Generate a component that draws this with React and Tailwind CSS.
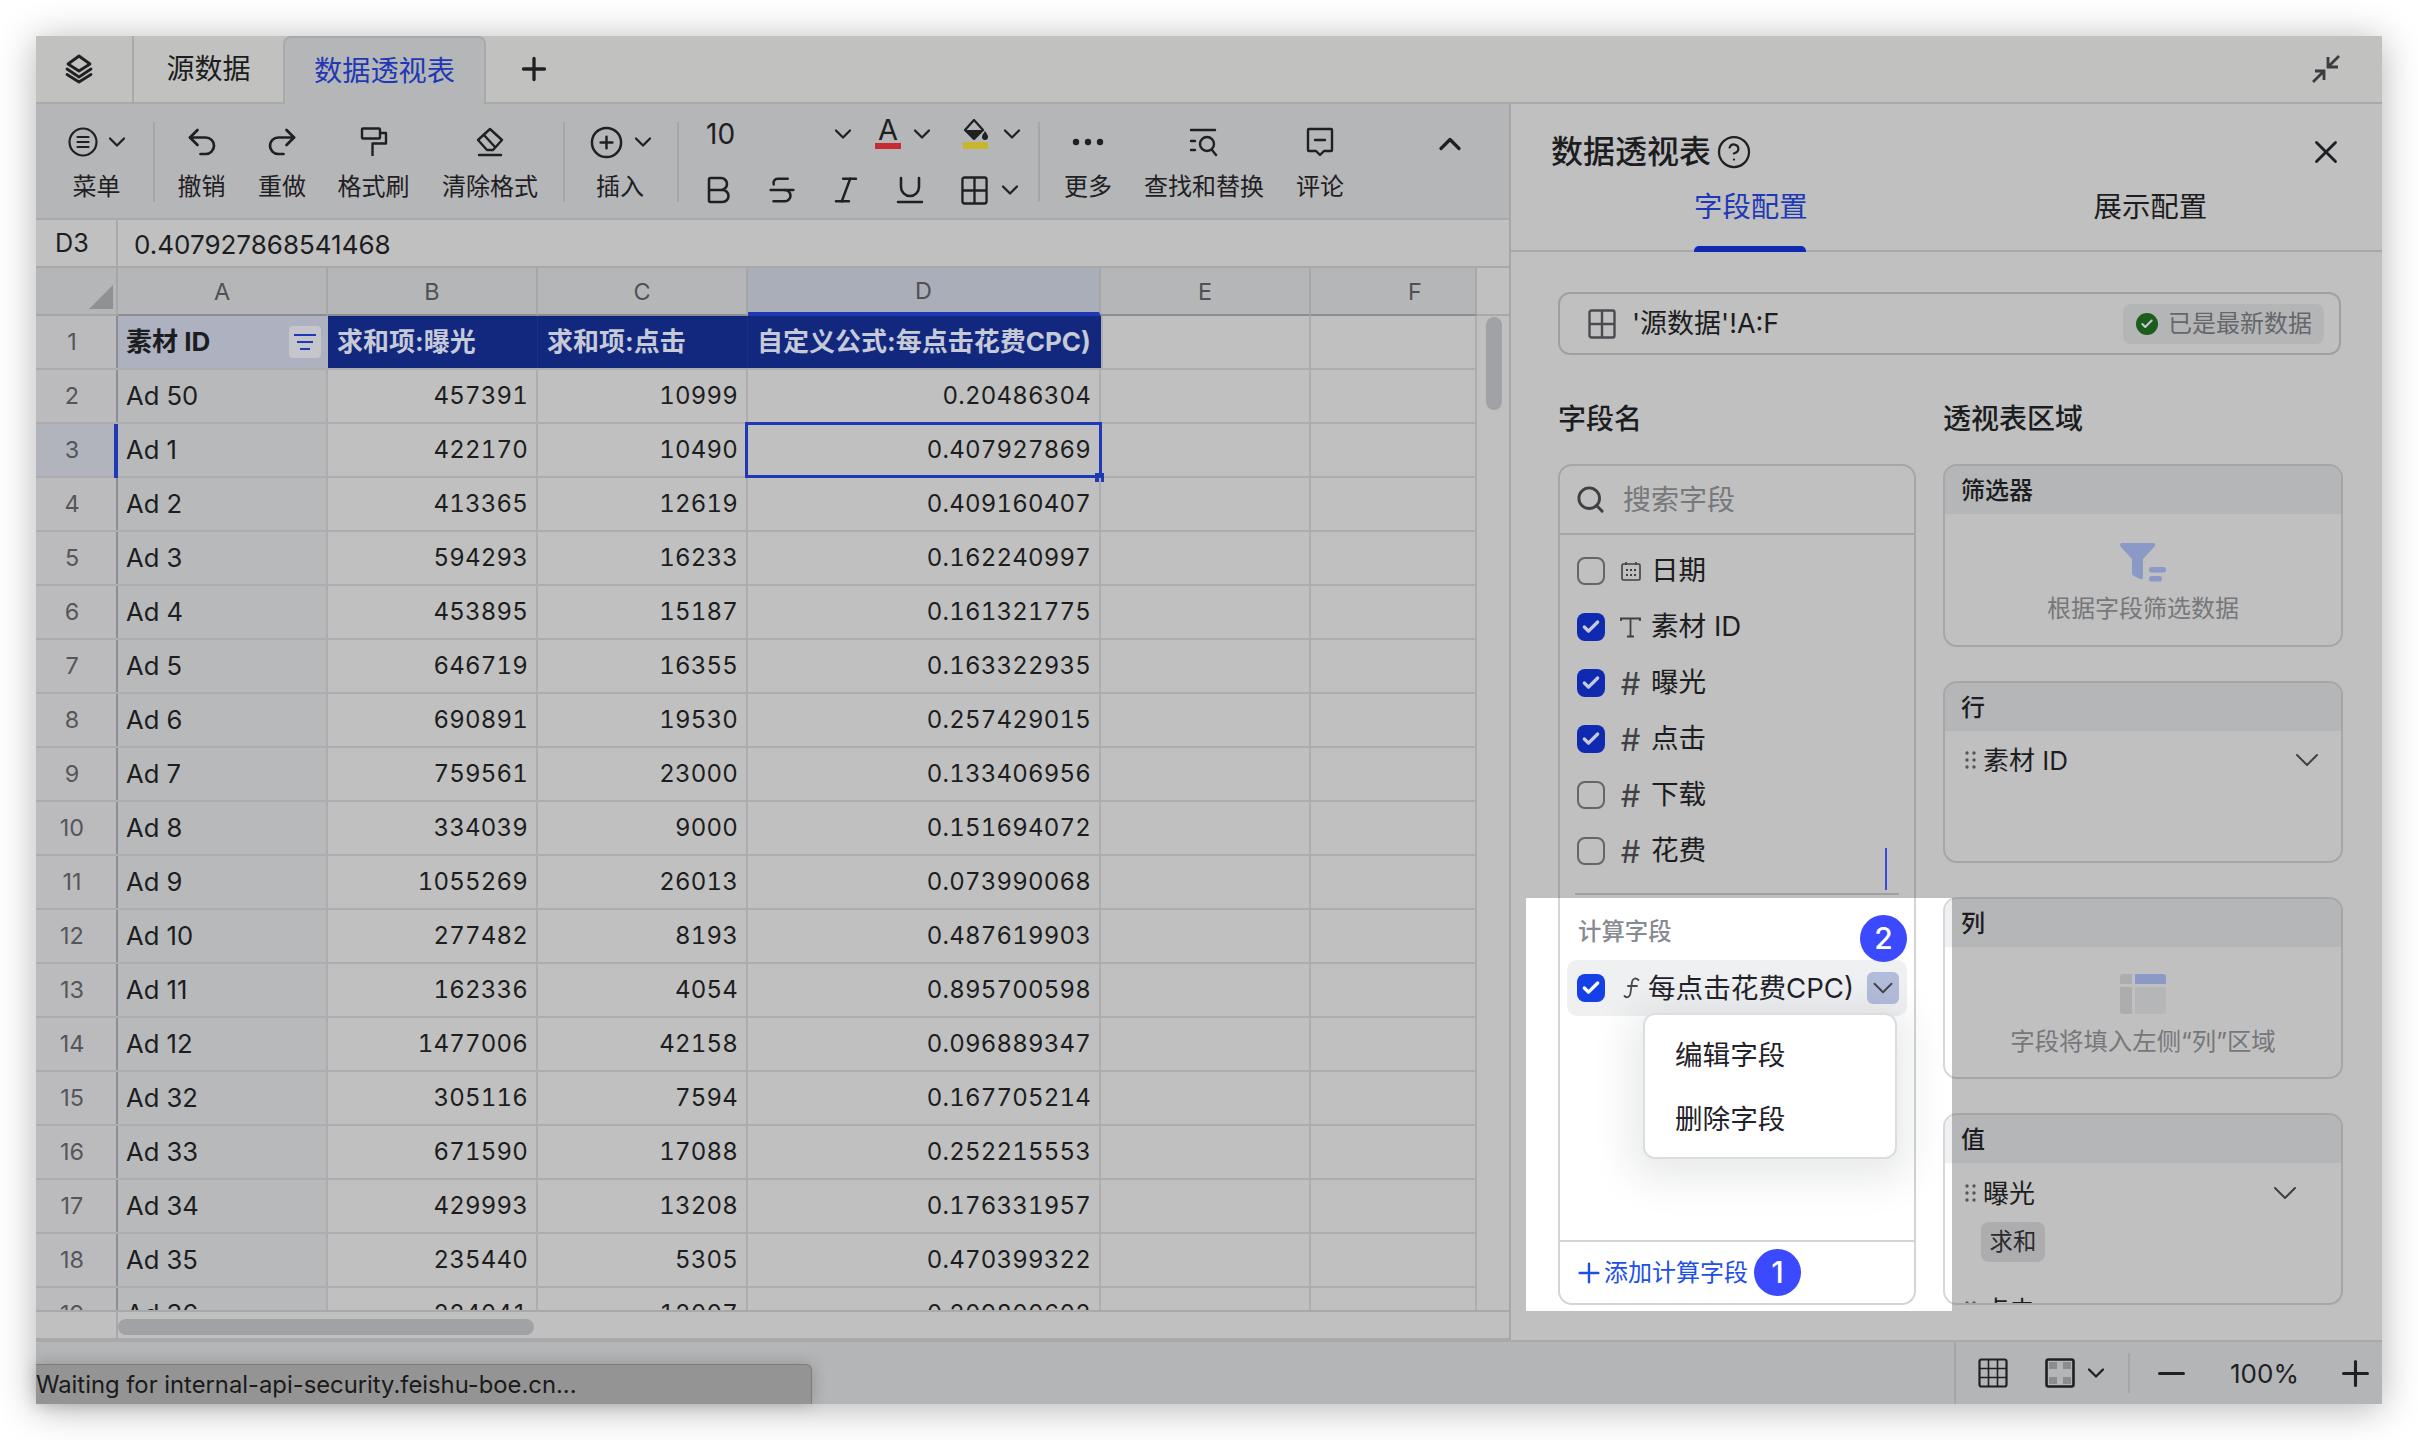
import React from "react";
import { Undo2, Redo2, CirclePlus, ChevronDown, ChevronUp, Bold, Italic, Underline, Strikethrough, X, CircleHelp, Search, Plus, Minus, Check } from "lucide-react";

const rows = [
  ["Ad 50", "457391", "10999", "0.20486304"],
  ["Ad 1", "422170", "10490", "0.407927869"],
  ["Ad 2", "413365", "12619", "0.409160407"],
  ["Ad 3", "594293", "16233", "0.162240997"],
  ["Ad 4", "453895", "15187", "0.161321775"],
  ["Ad 5", "646719", "16355", "0.163322935"],
  ["Ad 6", "690891", "19530", "0.257429015"],
  ["Ad 7", "759561", "23000", "0.133406956"],
  ["Ad 8", "334039", "9000", "0.151694072"],
  ["Ad 9", "1055269", "26013", "0.073990068"],
  ["Ad 10", "277482", "8193", "0.487619903"],
  ["Ad 11", "162336", "4054", "0.895700598"],
  ["Ad 12", "1477006", "42158", "0.096889347"],
  ["Ad 32", "305116", "7594", "0.167705214"],
  ["Ad 33", "671590", "17088", "0.252215553"],
  ["Ad 34", "429993", "13208", "0.176331957"],
  ["Ad 35", "235440", "5305", "0.470399322"],
  ["Ad 36", "224041", "12007", "0.209800602"],
];

const Chev = ({ className = "" }) => <ChevronDown size={28} strokeWidth={1.9} className={"shrink-0 -mx-[5px] text-[#1f2023] " + className} />;

const IconLayers = () => (
  <svg width="30" height="30" viewBox="0 0 30 30" fill="none" stroke="#1f2023" strokeWidth="2.8" strokeLinejoin="round" strokeLinecap="round">
    <path d="M15 2 L26 10 L15 17 L4 10Z" />
    <path d="M3 15 L15 23 L27 15" />
    <path d="M3 20.5 L15 28 L27 20.5" />
  </svg>
);
const IconMenu = () => (
  <svg width="30" height="30" viewBox="0 0 30 30" fill="none" stroke="#1f2023" strokeWidth="2.2" strokeLinecap="round">
    <circle cx="15" cy="15" r="13.5" />
    <path d="M9.5 10h11M9.5 15h11M9.5 20h11" />
  </svg>
);
const IconPainter = () => (
  <svg width="30" height="30" viewBox="0 0 30 30" fill="none" stroke="#1f2023" strokeWidth="2.4" strokeLinejoin="round">
    <rect x="3" y="1.5" width="18" height="10" rx="1" />
    <path d="M21 6h6v10.5H13.5V29" />
  </svg>
);
const IconEraser = () => (
  <svg width="30" height="30" viewBox="0 0 30 30" fill="none" stroke="#1f2023" strokeWidth="2.4" strokeLinejoin="round" strokeLinecap="round">
    <path d="M15 2 L27 13 L18 23 H12 L3 13 Z" />
    <path d="M9 8 L20 20" />
    <path d="M4 28h22" />
  </svg>
);
const IconFill = () => (
  <svg width="26" height="30" viewBox="0 0 26 30">
    <path d="M11 1 L20 11 L11 20 L2 11Z" fill="none" stroke="#1f2023" strokeWidth="2.2" strokeLinejoin="round" />
    <path d="M2.5 11 H19.5 L11 20Z" fill="#1f2023" />
    <path d="M22 12 C24 15 25 16 25 18 A3 3 0 0 1 19 18 C19 16 20 15 22 12Z" fill="#1f2023" />
    <rect x="0" y="23" width="25" height="7" rx="1" fill="#c9b62f" />
  </svg>
);
const IconDots3 = () => (
  <svg width="32" height="8" viewBox="0 0 32 8" fill="#1f2023">
    <circle cx="4" cy="4" r="3.2" /><circle cx="16" cy="4" r="3.2" /><circle cx="28" cy="4" r="3.2" />
  </svg>
);
const IconFind = () => (
  <svg width="30" height="30" viewBox="0 0 30 30" fill="none" stroke="#1f2023" strokeWidth="2.4" strokeLinecap="round">
    <path d="M2 3h24M2 14h4M2 23h4" />
    <circle cx="18" cy="17" r="7" />
    <path d="M23 23l4 5" />
  </svg>
);
const IconComment = () => (
  <svg width="28" height="30" viewBox="0 0 28 30" fill="none" stroke="#1f2023" strokeWidth="2.4" strokeLinejoin="round" strokeLinecap="round">
    <path d="M3 2h22a1 1 0 0 1 1 1v20a1 1 0 0 1-1 1h-7l-4 4-4-4H3a1 1 0 0 1-1-1V3a1 1 0 0 1 1-1z" />
    <path d="M9 13h10" />
  </svg>
);
const IconShrink = () => (
  <svg width="30" height="30" viewBox="0 0 30 30" fill="none" stroke="#3b3c40" strokeWidth="2.8">
    <path d="M28 2 L17 13 M17 3 V13 H27" />
    <path d="M2 28 L12 18 M4 17 H13 V26" />
  </svg>
);
const IconSheet = ({ c = "#4a4b50", w = 28, h = 30 }) => (
  <svg width={w} height={h} viewBox="0 0 28 30" fill="none" stroke={c} strokeWidth="2.4">
    <rect x="1.5" y="1.5" width="25" height="27" rx="2" />
    <path d="M14 1.5v27M1.5 15h25" />
  </svg>
);
const IconCal = () => (
  <svg width="20" height="20" viewBox="0 0 20 20" fill="none" stroke="#3f4044" strokeWidth="1.6">
    <rect x="1" y="3" width="18" height="16" rx="1.5" />
    <path d="M5 1v3M15 1v3" />
    <path d="M5 9h2M9 9h2M13 9h2M5 14h2M9 14h2M13 14h2" strokeWidth="2" />
  </svg>
);
const IconT = () => (
  <svg width="21" height="21" viewBox="0 0 21 21" fill="none" stroke="#3f4044" strokeWidth="1.8">
    <path d="M1 4V1.5h19V4M10.5 1.5V19.5M7 19.5h7" />
  </svg>
);
const IconFx = () => (
  <svg width="17" height="22" viewBox="0 0 17 22" fill="none" stroke="#4a4b50" strokeWidth="1.8" strokeLinecap="round">
    <path d="M15.5 3 C12 0 9.5 2 9 5 L7.5 16 C7 20 4 21.5 1.5 19" />
    <path d="M5 9h9" />
  </svg>
);
const IconFunnel = () => (
  <svg width="46" height="39" viewBox="0 0 46 39" fill="#8a99c6">
    <path d="M1 0 H34 Q36 1 35 3 L23 16 V34 Q23 37 20 36 L14 33 Q12 32 12 30 V16 L0 3 Q0 1 1 0Z" />
    <rect x="29" y="24" width="17" height="5.5" rx="2.5" />
    <rect x="29" y="33" width="13" height="5.5" rx="2.5" />
  </svg>
);
const IconColumn = () => (
  <svg width="46" height="40" viewBox="0 0 46 40">
    <path d="M3 0 H12 V10 H0 V3 A3 3 0 0 1 3 0Z" fill="#adadaf" />
    <path d="M0 13 H12 V40 H3 A3 3 0 0 1 0 37Z" fill="#adadaf" />
    <path d="M15 0 H43 A3 3 0 0 1 46 3 V10 H15Z" fill="#8a99c6" />
    <path d="M15 13 H46 V37 A3 3 0 0 1 43 40 H15Z" fill="#b5b6b8" />
  </svg>
);
const Dots = () => (
  <svg width="11" height="18" viewBox="0 0 11 18" fill="#55565a">
    <circle cx="2" cy="2" r="1.7" /><circle cx="9" cy="2" r="1.7" />
    <circle cx="2" cy="9" r="1.7" /><circle cx="9" cy="9" r="1.7" />
    <circle cx="2" cy="16" r="1.7" /><circle cx="9" cy="16" r="1.7" />
  </svg>
);
const IconGridSmall = () => (
  <svg width="30" height="30" viewBox="0 0 30 30" fill="none" stroke="#1f2023" strokeWidth="2.2">
    <rect x="1.5" y="1.5" width="27" height="27" rx="2" />
    <path d="M1.5 10.5h27M1.5 19.5h27M10.5 1.5v27M19.5 1.5v27" strokeWidth="1.6" />
  </svg>
);
const IconFreeze = () => (
  <svg width="30" height="30" viewBox="0 0 30 30">
    <rect x="4" y="4" width="8" height="7" fill="#8b8c8e" />
    <rect x="18" y="4" width="8" height="7" fill="#8b8c8e" />
    <rect x="4" y="19" width="8" height="7" fill="#8b8c8e" />
    <rect x="18" y="19" width="8" height="7" fill="#8b8c8e" />
    <rect x="1.5" y="1.5" width="27" height="27" rx="2" fill="none" stroke="#1f2023" strokeWidth="2.6" />
  </svg>
);

function ToolBtn({ icon, label, className = "", chev }) {
  return (
    <div className={"flex flex-col items-center shrink-0 pt-[23px] " + className}>
      <div className="h-[30px] flex items-center gap-[10px] text-[#1f2023]">
        {icon}
        {chev && <Chev />}
      </div>
      <div className="mt-[14px] h-[32px] leading-[32px] text-[24px] text-[#1f2023] whitespace-nowrap">{label}</div>
    </div>
  );
}
const VDiv = () => <div className="w-[2px] h-[80px] mt-[18px] bg-[#a5a6a8] shrink-0" />;
const Slot = ({ children, className = "" }) => <div className={"w-[60px] shrink-0 flex justify-center " + className}>{children}</div>;

function Toolbar() {
  return (
    <div className="h-[116px] shrink-0 flex bg-[#b5b6b8] border-b-2 border-[#a9a9ab]">
      <ToolBtn className="w-[117px] pl-[4px]" icon={<IconMenu />} chev label="菜单" />
      <VDiv />
      <ToolBtn className="w-[93px]" icon={<Undo2 size={36} strokeWidth={1.8} />} label="撤销" />
      <ToolBtn className="w-[68px]" icon={<Redo2 size={36} strokeWidth={1.8} />} label="重做" />
      <ToolBtn className="w-[115px]" icon={<IconPainter />} label="格式刷" />
      <ToolBtn className="w-[118px]" icon={<IconEraser />} label="清除格式" />
      <div className="w-[14px] shrink-0" />
      <VDiv />
      <ToolBtn className="w-[112px] pr-[2px]" icon={<CirclePlus size={35} strokeWidth={1.7} />} chev label="插入" />
      <VDiv />
      <div className="w-[359px] shrink-0 pt-[12px] text-[#1f2023]">
        <div className="h-[36px] flex items-center">
          <span className="ml-[27px] w-[128px] text-[28px]">10</span>
          <Chev />
          <div className="ml-[23px] w-[26px] flex flex-col items-center">
            <span className="text-[29px] leading-[22px] h-[22px]">A</span>
            <div className="mt-[2px] w-[26px] h-[6px] bg-[#c52b30]" />
          </div>
          <Chev className="ml-[7px]" />
          <div className="ml-[32px]"><IconFill /></div>
          <Chev className="ml-[9px]" />
        </div>
        <div className="mt-[20px] h-[36px] flex items-center">
          <Slot className="ml-[9px]"><Bold size={36} strokeWidth={1.7} /></Slot>
          <Slot className="ml-[4px]"><Strikethrough size={34} strokeWidth={1.8} /></Slot>
          <Slot className="ml-[4px]"><Italic size={34} strokeWidth={1.8} /></Slot>
          <Slot className="ml-[3.5px]"><Underline size={36} strokeWidth={1.7} /></Slot>
          <Slot className="ml-[4.5px]"><IconSheet c="#1f2023" w={27} h={29} /></Slot>
          <Chev className="-ml-[8px]" />
        </div>
      </div>
      <VDiv />
      <ToolBtn className="w-[96px]" icon={<IconDots3 />} label="更多" />
      <ToolBtn className="w-[136px]" icon={<IconFind />} label="查找和替换" />
      <ToolBtn className="w-[96px]" icon={<IconComment />} label="评论" />
      <div className="ml-auto mr-[41px] pt-[22px]"><ChevronUp size={36} strokeWidth={2.2} className="text-[#1f2023]" /></div>
    </div>
  );
}

const colH = "h-full flex items-center justify-center pt-[2px] border-r-2 border-[#a6a7a9] text-[23.4px] text-[#505156]";

function Sheet() {
  return (
    <div className="flex-1 flex flex-col min-h-0">
      <div className="h-[48px] shrink-0 flex bg-[#b5b6b8]">
        <div className="w-[82px] shrink-0 h-full relative border-r-2 border-b-2 border-[#a6a7a9]">
          <svg className="absolute right-[3px] bottom-[5px]" width="24" height="24" viewBox="0 0 24 24"><path d="M24 0V24H0Z" fill="#8f9194" /></svg>
        </div>
        {["A", "B", "C"].map((l) => (
          <div key={l} className={"w-[210px] shrink-0 border-b-2 !border-b-[#8d8e91] " + colH}>{l}</div>
        ))}
        <div className={"w-[353px] shrink-0 bg-[#aaaeb8] border-b-4 !border-b-[#1f39b4] " + colH}>D</div>
        <div className={"w-[210px] shrink-0 border-b-2 !border-b-[#8d8e91] " + colH}>E</div>
        <div className={"w-[166px] shrink-0 border-b-2 !border-b-[#8d8e91] pl-[44px] " + colH}>F</div>
        <div className="flex-1 bg-[#c0c0c0] border-b-2 border-[#a9a9ab]" />
      </div>
      <div className="flex-1 flex min-h-0">
        <div className="w-[1441px] shrink-0 overflow-hidden">
          <div className="h-[54px] flex border-b-2 border-[#adadaf]">
            <div className="w-[82px] shrink-0 bg-[#bbbbbd] border-r-2 border-[#8d8e91] flex items-center justify-center pr-[8px] text-[23.4px] text-[#55565a]">1</div>
            <div className="w-[210px] shrink-0 bg-[#adb1c0] flex items-center justify-between pl-[8px] pr-[7px] text-[26px] font-bold text-[#1c1d20]">
              <span className="pb-[2px]">素材 ID</span>
              <div className="w-[32px] h-[32px] rounded-[4px] bg-[#c5c6cb] flex flex-col items-center justify-center gap-[5px]">
                <div className="w-[22px] h-[2px] bg-[#1f39b4]" />
                <div className="w-[16px] h-[2px] bg-[#1f39b4]" />
                <div className="w-[10px] h-[2px] bg-[#1f39b4]" />
              </div>
            </div>
            {["求和项:曝光", "求和项:点击"].map((t) => (
              <div key={t} className="w-[210px] shrink-0 bg-[#12287f] flex items-center pl-[9px] pb-[2px] text-[26px] font-bold text-[#c6c9d6] border-r border-[#1b2f85]">{t}</div>
            ))}
            <div className="w-[353px] shrink-0 bg-[#12287f] flex items-center pl-[9px] pb-[2px] text-[26px] font-bold text-[#c6c9d6] whitespace-nowrap">自定义公式:每点击花费CPC)</div>
            <div className="w-[210px] shrink-0 border-l-2 border-r-2 border-[#adadaf]" />
            <div className="w-[166px] shrink-0 border-r-2 border-[#adadaf]" />
          </div>
          {rows.map((r, i) => {
            const sel = i === 1;
            const num = "w-[210px] shrink-0 flex items-center justify-end pr-[8px] border-r-2 border-[#adadaf] text-[24px] tabular-nums tracking-[0.2px]";
            return (
              <div key={i} className="h-[54px] flex border-b-2 border-[#adadaf] text-[25.6px] text-[#1c1d20]">
                <div className={"w-[82px] shrink-0 flex items-center justify-center pr-[8px] text-[23.4px] text-[#55565a] border-r-2 border-[#8d8e91] relative " + (sel ? "bg-[#b1b4bd]" : "bg-[#bbbbbd]")}>
                  {i + 2}
                  {sel && <div className="absolute right-[-2px] top-0 bottom-[-2px] w-[4px] bg-[#1f39b4]" />}
                </div>
                <div className="w-[210px] shrink-0 bg-[#b8b9bb] flex items-center pl-[8px] border-r-2 border-[#adadaf]">{r[0]}</div>
                <div className={num}>{r[1]}</div>
                <div className={num}>{r[2]}</div>
                <div className={"!w-[353px] relative " + num}>
                  {r[3]}
                  {sel && (
                    <div className="absolute left-[-3px] right-[-3px] top-[-2px] bottom-[-2px] border-[3px] border-[#1f39b4]">
                      <div className="absolute right-[-5px] bottom-[-7px] w-[9px] h-[9px] bg-[#1f39b4]" />
                    </div>
                  )}
                </div>
                <div className="w-[210px] shrink-0 border-r-2 border-[#adadaf]" />
                <div className="w-[166px] shrink-0 border-r-2 border-[#adadaf]" />
              </div>
            );
          })}
        </div>
        <div className="flex-1 pl-[9px] pt-[1px]">
          <div className="w-[16px] h-[93px] rounded-full bg-[#a1a2a5]" />
        </div>
      </div>
      <div className="h-[30px] shrink-0 flex border-y-2 border-[#a9a9ab]">
        <div className="w-[82px] shrink-0 border-r-2 border-[#a9a9ab]" />
        <div className="mt-[7px] w-[416px] h-[16px] rounded-full bg-[#a1a2a5]" />
      </div>
    </div>
  );
}

function FieldRow({ icon, label, checked, hash }) {
  return (
    <div className="h-[56px] flex items-center pl-[17px]">
      <div className={"w-[28px] h-[28px] rounded-[8px] flex items-center justify-center " + (checked ? "bg-[#0f2ab0]" : "border-2 border-[#65666a]")}>
        {checked && <Check size={20} strokeWidth={4} className="text-[#c6c9d6]" />}
      </div>
      <div className="ml-[14px] w-[23px] flex items-center justify-center text-[#3f4044] text-[31px] leading-none">{hash ? "#" : icon}</div>
      <span className="ml-[9px] text-[27.6px] text-[#1c1d20]">{label}</span>
    </div>
  );
}

function Area({ title, className = "", children }) {
  return (
    <div className={"w-[400px] shrink-0 rounded-[14px] overflow-hidden border-2 border-[#a6a6a8] " + className}>
      <div className="h-[48px] bg-[#b5b6b8] flex items-center pl-[16px] pt-[2px] text-[24px] font-medium text-[#1c1d20]">{title}</div>
      {children}
    </div>
  );
}

function Panel() {
  return (
    <div className="flex-1 border-l-2 border-[#a6a7a9] flex flex-col min-w-0 overflow-hidden">
      <div className="h-[148px] shrink-0 border-b-2 border-[#a9a9ab] relative">
        <div className="pt-[30px] h-[66px] flex items-center pl-[40px] pr-[37px]">
          <span className="text-[32px] font-medium text-[#1c1d20]">数据透视表</span>
          <CircleHelp size={36} strokeWidth={1.5} className="ml-[5px] text-[#1f2023]" />
          <X size={38} strokeWidth={1.8} className="ml-auto text-[#1f2023]" />
        </div>
        <div className="flex h-[76px] pb-[2px] items-center">
          <span className="ml-[183px] text-[28.4px] text-[#1f39b4]">字段配置</span>
          <span className="ml-[286px] text-[28.4px] text-[#1c1d20]">展示配置</span>
        </div>
        <div className="absolute left-[183px] bottom-[-2px] w-[112px] h-[6px] rounded-t-[5px] bg-[#0f2ab0]" />
      </div>
      <div className="pl-[47px] pt-[40px] flex-1 min-h-0 overflow-hidden">
        <div className="w-[783px] h-[63px] rounded-[12px] border-2 border-[#a0a0a3] flex items-center pl-[28px] pr-[15px]">
          <IconSheet />
          <span className="ml-[16px] pt-[2px] text-[27px] text-[#1c1d20]">'源数据'!A:F</span>
          <div className="ml-auto h-[40px] w-[201px] rounded-[8px] bg-[#b4b5b7] flex items-center pl-[13px]">
            <div className="w-[22px] h-[22px] rounded-full bg-[#1c5d1e] flex items-center justify-center"><Check size={14} strokeWidth={3.5} className="text-[#c6c9d6]" /></div>
            <span className="ml-[10px] text-[24px] text-[#66676b] whitespace-nowrap">已是最新数据</span>
          </div>
        </div>
        <div className="mt-[44px] h-[40px] flex items-center text-[28px] font-medium text-[#1c1d20]">
          <span className="w-[385px]">字段名</span>
          <span>透视表区域</span>
        </div>
        <div className="mt-[25px] flex gap-[27px] items-start">
          <div className="w-[358px] h-[841px] shrink-0 rounded-[14px] border-2 border-[#a6a6a8] relative">
            <div className="h-[69px] border-b-2 border-[#a6a6a8] flex items-center pl-[15px]">
              <Search size={31} strokeWidth={2.2} className="text-[#3f4044]" />
              <span className="ml-[17px] text-[28px] text-[#77787b]">搜索字段</span>
            </div>
            <div className="pt-[8px]">
              <FieldRow icon={<IconCal />} label="日期" />
              <FieldRow checked icon={<IconT />} label="素材 ID" />
              <FieldRow checked hash label="曝光" />
              <FieldRow checked hash label="点击" />
              <FieldRow hash label="下载" />
              <FieldRow hash label="花费" />
            </div>
            <div className="absolute left-[325px] top-[382px] w-[2px] h-[42px] bg-[#3a4bdb]" />
            <div className="mt-[14px] mx-[15px] h-[2px] bg-[#a0a0a3]" />
          </div>
          <div className="flex flex-col gap-[34px] h-[841px] overflow-hidden">
            <Area title="筛选器" className="h-[183px]">
              <div className="flex flex-col items-center pt-[29px]">
                <IconFunnel />
                <span className="mt-[9px] text-[24px] text-[#76777a]">根据字段筛选数据</span>
              </div>
            </Area>
            <Area title="行" className="h-[182px]">
              <div className="flex items-center h-[60px] pl-[20px] pr-[14px] -mt-[1px]">
                <Dots />
                <span className="ml-[7px] text-[26px] text-[#1c1d20]">素材 ID</span>
                <ChevronDown size={40} strokeWidth={1.2} className="ml-auto text-[#3f4044]" />
              </div>
            </Area>
            <Area title="列" className="h-[182px]">
              <div className="flex flex-col items-center pt-[27px]">
                <IconColumn />
                <span className="mt-[9px] text-[24.4px] text-[#76777a]">字段将填入左侧“列”区域</span>
              </div>
            </Area>
            <Area title="值" className="h-[192px]">
              <div className="flex items-center h-[50px] pl-[20px] pr-[36px] mt-[5px]">
                <Dots />
                <span className="ml-[7px] text-[26px] text-[#1c1d20]">曝光</span>
                <ChevronDown size={40} strokeWidth={1.2} className="ml-auto text-[#3f4044]" />
              </div>
              <div className="ml-[36px] mt-[4px] w-[64px] h-[40px] rounded-[8px] bg-[#adadaf] flex items-center justify-center text-[23.4px] text-[#2a2b2e]">求和</div>
              <div className="flex items-center h-[50px] pl-[20px] pr-[36px] mt-[23px]">
                <Dots />
                <span className="ml-[7px] text-[26px] text-[#1c1d20]">点击</span>
                <ChevronDown size={40} strokeWidth={1.2} className="ml-auto text-[#3f4044]" />
              </div>
            </Area>
          </div>
        </div>
      </div>
    </div>
  );
}

function Footer() {
  return (
    <div className="h-[64px] shrink-0 flex items-end bg-[#b4b5b7] border-t-2 border-[#a9a9ab]">
      <div className="w-[776px] h-[40px] bg-[#949494] border-t border-r border-[#7c7c7c] rounded-tr-[6px] shadow-[0_0_16px_rgba(0,0,0,0.2)] flex items-center text-[23.8px] text-[#1a1a1a] whitespace-nowrap">Waiting for internal-api-security.feishu-boe.cn...</div>
      <div className="ml-auto h-full w-[428px] shrink-0 border-l-2 border-[#a5a6a8] flex items-center text-[#1f2023]">
        <div className="ml-[22px]"><IconGridSmall /></div>
        <div className="ml-[37px]"><IconFreeze /></div>
        <Chev className="ml-[7px]" />
        <div className="ml-[23px] w-[2px] h-[40px] bg-[#a5a6a8]" />
        <Minus size={41} strokeWidth={1.8} className="ml-[21px] -mr-[2.5px]" />
        <span className="ml-[40.5px] text-[26px]">100%</span>
        <Plus size={41} strokeWidth={1.8} className="ml-[36px] -mr-[2.5px]" />
      </div>
    </div>
  );
}

function Spotlight() {
  return (
    <div className="absolute left-[1526px] top-[898px] w-[426px] h-[413px] bg-white overflow-hidden">
      <div className="absolute left-[417px] top-[-1px] w-[400px] h-[182px] rounded-[14px] overflow-hidden border-2 border-[#d6d7d9]">
        <div className="h-[48px] bg-[#eff0f1]" />
      </div>
      <div className="absolute left-[417px] top-[215px] w-[400px] h-[192px] rounded-[14px] overflow-hidden border-2 border-[#d6d7d9]">
        <div className="h-[48px] bg-[#eff0f1]" />
      </div>
      <div className="ml-[32px] w-[358px] h-[407px] border-x-2 border-b-2 border-[#d3d4d6] rounded-b-[14px] flex flex-col relative">
        <div className="h-[62px] pt-[17px] pl-[18px] text-[23.4px] font-medium leading-[34px] text-[#878a90]">计算字段</div>
        <div className="mx-[7px] h-[56px] rounded-[10px] bg-[#eff0f1] flex items-center pl-[10px]">
          <div className="w-[28px] h-[28px] rounded-[8px] bg-[#1540e8] flex items-center justify-center"><Check size={20} strokeWidth={4} className="text-white" /></div>
          <div className="ml-[18px] w-[17px]"><IconFx /></div>
          <span className="ml-[8px] pt-[2px] text-[27.6px] text-[#1f2329] whitespace-nowrap">每点击花费CPC)</span>
          <div className="ml-auto mr-[8px] w-[32px] h-[32px] rounded-[6px] bg-[#b3bcdb] flex items-center justify-center"><ChevronDown size={34} strokeWidth={1.3} className="shrink-0 text-[#40424a]" /></div>
        </div>
        <div className="flex-1" />
        <div className="h-[63px] border-t-2 border-[#d3d4d6] flex items-center pl-[13px] text-[#1d4fe8]">
          <Plus size={32} strokeWidth={1.8} />
          <span className="ml-[-1px] pt-[1px] text-[24px]">添加计算字段</span>
          <div className="ml-[6px] w-[47px] h-[47px] rounded-full bg-[#3b49ff] text-white text-[30px] font-medium flex items-center justify-center">1</div>
        </div>
        <div className="absolute left-[300px] top-[17px] w-[47px] h-[47px] rounded-full bg-[#3b49ff] text-white text-[30px] font-medium flex items-center justify-center">2</div>
        <div className="absolute left-[83px] top-[115px] w-[254px] h-[146px] rounded-[12px] bg-white border-2 border-[#dcdde0] shadow-[0_8px_40px_12px_rgba(31,35,41,0.1)] pt-[9px] pl-[30px] text-[27.6px] text-[#1f2329]">
          <div className="h-[64px] flex items-center">编辑字段</div>
          <div className="h-[64px] flex items-center">删除字段</div>
        </div>
      </div>
    </div>
  );
}

export default function App() {
  return (
    <div className="relative w-[2418px] h-[1440px] bg-white p-[36px] overflow-hidden font-[Inter,'Noto_Sans_CJK_SC',sans-serif]">
      <div className="w-[2346px] h-[1368px] flex flex-col bg-[#c0c0c0] shadow-[0_4px_36px_rgba(0,0,0,0.3)]">
        <div className="h-[68px] shrink-0 flex bg-[#c1c1bf] border-b-2 border-[#a9a9ab] relative">
          <div className="w-[98px] h-full border-r-2 border-[#a9a9ab] flex items-center justify-center pr-[10px] shrink-0"><IconLayers /></div>
          <div className="w-[149px] flex items-center justify-center text-[28px] text-[#1c1d20] shrink-0">源数据</div>
          <div className="w-[203px] h-[68px] rounded-t-[8px] bg-[#b5b6b8] border-x-2 border-t-2 border-[#a9a9ab] flex items-center justify-center text-[28.2px] text-[#1f39b4] shrink-0">数据透视表</div>
          <Plus size={36} strokeWidth={2.2} className="ml-[30px] mt-[15px] text-[#1f2023]" />
          <div className="ml-auto mr-[41px] mt-[18px]"><IconShrink /></div>
        </div>
        <div className="flex-1 flex min-h-0">
          <div className="w-[1473px] shrink-0 flex flex-col min-h-0">
            <Toolbar />
            <div className="h-[48px] shrink-0 flex border-b-2 border-[#a9a9ab]">
              <div className="w-[82px] shrink-0 border-r-2 border-[#a9a9ab] flex items-center pl-[19px] pt-[2px] text-[25.2px] text-[#1c1d20]">D3</div>
              <div className="flex-1 flex items-center pl-[16px] pt-[2px] text-[26px] text-[#1c1d20]">0.407927868541468</div>
            </div>
            <Sheet />
          </div>
          <Panel />
        </div>
        <Footer />
      </div>
      <Spotlight />
    </div>
  );
}
